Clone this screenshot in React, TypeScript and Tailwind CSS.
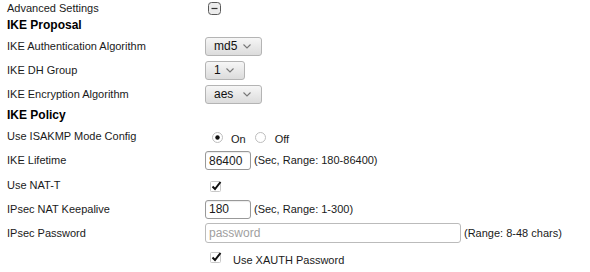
function Select({ value, width }: { value: string; width: string }) {
  return (
    <div
      className={`${width} h-[19px] flex items-center justify-between pl-[8px] pr-[10px] border border-[#b4b4b4] rounded-[3px] bg-gradient-to-b from-[#f6f6f6] to-[#dcdcdc] text-[12px] text-[#111]`}
    >
      <span>{value}</span>
      <svg width="8" height="5" viewBox="0 0 8 5">
        <path d="M0.5 0.5 L4 4 L7.5 0.5" fill="none" stroke="#777" strokeWidth="1.1" />
      </svg>
    </div>
  )
}

function Check() {
  return (
    <svg width="13" height="12" viewBox="0 0 13 12">
      <rect x="0.5" y="1.5" width="10" height="10" rx="1" fill="#fff" stroke="#c8c8c8" />
      <path d="M2.5 6.5 L5 9 L10.5 2" fill="none" stroke="#111" strokeWidth="2" />
    </svg>
  )
}

function Radio({ on }: { on?: boolean }) {
  return (
    <svg width="11" height="11" viewBox="0 0 11 11">
      <circle cx="5.5" cy="5.5" r="5" fill="#fff" stroke="#bdbdbd" />
      {on && <circle cx="5.5" cy="5.5" r="2.2" fill="#111" />}
    </svg>
  )
}

function Row({ label, h = 'h-6', children }: { label?: string; h?: string; children?: React.ReactNode }) {
  return (
    <div className={`flex items-center ${h}`}>
      <div className="w-[198px] shrink-0">{label}</div>
      <div className="flex items-center">{children}</div>
    </div>
  )
}

export default function App() {
  return (
    <div className="w-[590px] h-[272px] bg-white pl-[7px] font-['Liberation_Sans',Arial,sans-serif] text-[11px] text-[#1a1a1a] overflow-hidden">
      <Row label="Advanced Settings" h="h-4">
        <svg width="13" height="13" viewBox="0 0 13 13" className="ml-[3px]">
          <rect x="0.5" y="0.5" width="12" height="12" rx="3" fill="#ececec" stroke="#5a5a5a" />
          <path d="M3.5 6.5 H9.5" stroke="#333" strokeWidth="1.2" />
        </svg>
      </Row>
      <div className="h-[18px] flex items-center text-[12px] font-bold text-black">IKE Proposal</div>
      <Row label="IKE Authentication Algorithm">
        <Select value="md5" width="w-[57px]" />
      </Row>
      <Row label="IKE DH Group">
        <Select value="1" width="w-[40px]" />
      </Row>
      <Row label="IKE Encryption Algorithm">
        <Select value="aes" width="w-[57px]" />
      </Row>
      <div className="h-[18px] flex items-center text-[12px] font-bold text-black">IKE Policy</div>
      <Row label="Use ISAKMP Mode Config">
        <div className="flex items-center ml-[7px] mt-[2px]">
          <Radio on />
          <span className="ml-[8px] mt-[5px]">On</span>
          <span className="ml-[9px]">
            <Radio />
          </span>
          <span className="ml-[9px] mt-[5px]">Off</span>
        </div>
      </Row>
      <Row label="IKE Lifetime" h="h-[25px]">
        <div className="w-[46px] h-[19px] border border-[#999] rounded-[3px] px-[3px] flex items-center text-[12px] shadow-[inset_0_1px_1px_rgba(0,0,0,0.08)]">
          86400
        </div>
        <span className="ml-[3px]">(Sec, Range: 180-86400)</span>
      </Row>
      <Row label="Use NAT-T">
        <span className="ml-[5px] mt-[1px]">
          <Check />
        </span>
      </Row>
      <Row label="IPsec NAT Keepalive">
        <div className="w-[46px] h-[19px] border border-[#999] rounded-[3px] px-[3px] flex items-center text-[12px] shadow-[inset_0_1px_1px_rgba(0,0,0,0.08)]">
          180
        </div>
        <span className="ml-[3px]">(Sec, Range: 1-300)</span>
      </Row>
      <Row label="IPsec Password">
        <div className="w-[256px] h-[20px] border border-[#bbb] rounded-[3px] px-[3px] flex items-center text-[12px] text-[#a0a0a0]">
          password
        </div>
        <span className="ml-[3px]">(Range: 8-48 chars)</span>
      </Row>
      <Row>
        <span className="ml-[5px]">
          <Check />
        </span>
        <span className="ml-[10px] mt-[7px]">Use XAUTH Password</span>
      </Row>
    </div>
  )
}
